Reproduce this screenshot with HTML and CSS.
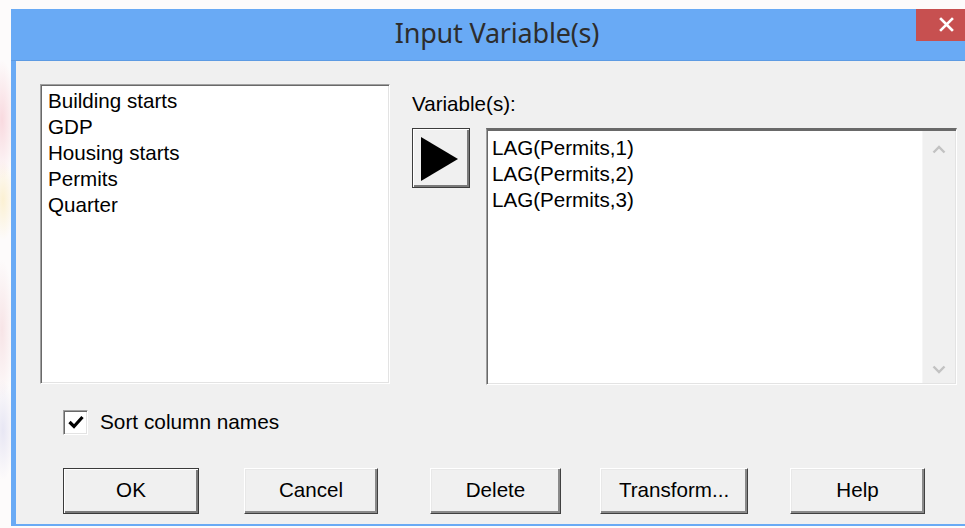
FILE: index.html
```html
<!DOCTYPE html>
<html lang="en">
<head>
<meta charset="utf-8">
<title>Input Variable(s)</title>
<link rel="stylesheet" href="styles.css">
</head>
<body>
<div class="desktop">
  <div class="window">
    <div class="titlebar">
      <div class="title">Input Variable(s)</div>
      <div class="close">
        <svg width="15" height="15" viewBox="0 0 15 15"><path d="M2 2 L13 13 M13 2 L2 13" stroke="#fff" stroke-width="2.6" stroke-linecap="square"/></svg>
      </div>
    </div>
    <div class="client">
      <div class="top-row">
        <div class="listbox source">
          <div class="item">Building starts</div>
          <div class="item">GDP</div>
          <div class="item">Housing starts</div>
          <div class="item">Permits</div>
          <div class="item">Quarter</div>
        </div>
        <div class="target-col">
          <div class="field-label">Variable(s):</div>
          <div class="target-row">
            <div class="arrow-btn">
              <svg width="38" height="46" viewBox="0 0 38 46"><polygon points="0,1 37,23 0,45" fill="#000"/></svg>
            </div>
            <div class="listbox target">
              <div class="items">
                <div class="item">LAG(Permits,1)</div>
                <div class="item">LAG(Permits,2)</div>
                <div class="item">LAG(Permits,3)</div>
              </div>
              <div class="scrollbar">
                <svg width="14" height="9" viewBox="0 0 14 9"><path d="M1.5 7.5 L7 2 L12.5 7.5" fill="none" stroke="#c2c2c2" stroke-width="2.4"/></svg>
                <svg width="14" height="9" viewBox="0 0 14 9"><path d="M1.5 1.5 L7 7 L12.5 1.5" fill="none" stroke="#c2c2c2" stroke-width="2.4"/></svg>
              </div>
            </div>
          </div>
        </div>
      </div>
      <label class="check-row">
        <span class="checkbox">
          <svg width="16" height="14" viewBox="0 0 16 14"><path d="M1.5 7 L6 11.5 L14.5 2" fill="none" stroke="#000" stroke-width="3.2"/></svg>
        </span>
        <span class="check-text">Sort column names</span>
      </label>
      <div class="buttons">
        <div class="btn default btn-ok">OK</div>
        <div class="btn btn-cancel">Cancel</div>
        <div class="btn btn-delete">Delete</div>
        <div class="btn btn-transform">Transform...</div>
        <div class="btn btn-help">Help</div>
      </div>
    </div>
  </div>
</div>
</body>
</html>
```
FILE: styles.css
```css
html, body {
  margin: 0;
  padding: 0;
  width: 965px;
  height: 528px;
  overflow: hidden;
}

body {
  background:
    radial-gradient(ellipse 14px 60px at 2px 120px, rgba(245, 190, 200, 0.55), transparent),
    radial-gradient(ellipse 12px 40px at 3px 200px, rgba(250, 230, 170, 0.5), transparent),
    radial-gradient(ellipse 12px 70px at 2px 330px, rgba(240, 200, 205, 0.45), transparent),
    radial-gradient(ellipse 12px 50px at 3px 430px, rgba(205, 205, 235, 0.45), transparent),
    #fdfbfb;
  font-family: "Liberation Sans", Arial, sans-serif;
  color: #000;
}

.desktop {
  padding: 9px 0 0 11px;
}

.window {
  width: 954px;
  height: 517px;
  display: flex;
  flex-direction: column;
  background: #69aaf5;
}

/* caption */
.titlebar {
  position: relative;
  height: 51px;
  border-bottom: 1px solid #5d9be3;
  display: flex;
  align-items: center;
  justify-content: center;
}

.title {
  font-family: "Noto Sans", "Open Sans", sans-serif;
  font-size: 27px;
  color: #2d2d2d;
  margin-left: 18px;
  margin-top: -5px;
  letter-spacing: -0.2px;
}

.close {
  position: absolute;
  top: 0;
  right: 0;
  width: 49px;
  height: 32px;
  background: #c75050;
  display: flex;
  align-items: center;
  justify-content: center;
  padding: 0 0 2px 12px;
  box-sizing: border-box;
}

/* dialog area */
.client {
  flex: 1;
  margin-left: 5px;
  margin-bottom: 2px;
  background: #f0f0f0;
  padding: 23px 0 0 24px;
  box-sizing: border-box;
}

.top-row {
  display: flex;
  align-items: flex-start;
}

.listbox {
  background: #fff;
  box-sizing: border-box;
  border-top: 1px solid #a0a0a0;
  border-left: 1px solid #a0a0a0;
  border-right: 1px solid #fff;
  border-bottom: 1px solid #fff;
  box-shadow: inset 1px 1px 0 #696969, inset -1px -1px 0 #e3e3e3;
}

.item {
  font-size: 20.6px;
  line-height: 26px;
  height: 26px;
  white-space: nowrap;
}

.source {
  width: 350px;
  height: 300px;
  padding: 3px 0 0 7px;
}

.target-col {
  margin-left: 22px;
  display: flex;
  flex-direction: column;
}

.field-label {
  font-size: 20.6px;
  line-height: 24px;
  height: 44px;
  padding-top: 8px;
  box-sizing: border-box;
}

.target-row {
  display: flex;
  align-items: flex-start;
}

.arrow-btn {
  width: 58px;
  height: 60px;
  box-sizing: border-box;
  background: #f0f0f0;
  border: 1px solid #3c3c3c;
  box-shadow: inset 1px 1px 0 #fff, inset -2px -2px 0 #7a7a7a;
  display: flex;
  align-items: center;
  justify-content: center;
  padding: 1px 2px 0 0;
}

.target {
  margin-left: 16px;
  width: 471px;
  height: 257px;
  display: flex;
  border-top-color: #696969;
  border-top-width: 2px;
}

.target .items {
  flex: 1;
  padding: 5px 0 0 5px;
}

.scrollbar {
  width: 33px;
  margin: 1px 1px 1px 0;
  background: #f0f0f0;
  border-left: 1px solid #f6f6f6;
  display: flex;
  flex-direction: column;
  justify-content: space-between;
  align-items: center;
  padding: 14px 0 9px;
  box-sizing: border-box;
}

/* checkbox */
.check-row {
  display: flex;
  align-items: center;
  margin: 24px 0 0 23px;
  height: 26px;
}

.checkbox {
  width: 25px;
  height: 25px;
  box-sizing: border-box;
  background: #fff;
  border-top: 1px solid #a0a0a0;
  border-left: 1px solid #a0a0a0;
  border-right: 1px solid #fff;
  border-bottom: 1px solid #fff;
  box-shadow: inset 1px 1px 0 #696969, inset -1px -1px 0 #e3e3e3;
  display: flex;
  align-items: center;
  justify-content: center;
}

.check-text {
  font-size: 20.8px;
  margin-left: 12px;
}

/* push buttons */
.buttons {
  display: flex;
  margin: 33px 0 0 23px;
}

.btn {
  height: 46px;
  box-sizing: border-box;
  background: #f0f0f0;
  border-top: 1px solid #fff;
  border-left: 1px solid #fff;
  border-right: 1px solid #404040;
  border-bottom: 1px solid #404040;
  box-shadow: inset -2px -2px 0 #8a8a8a, inset 1px 1px 0 #e8e8e8;
  display: flex;
  align-items: center;
  justify-content: center;
  font-size: 20.6px;
  padding-bottom: 2px;
}

.btn.default {
  border: 1px solid #3a3a3a;
  box-shadow: inset 1px 1px 0 #fff, inset -2px -2px 0 #7a7a7a;
}

.btn-ok { width: 136px; }
.btn-cancel { width: 134px; margin-left: 45px; }
.btn-delete { width: 131px; margin-left: 52px; }
.btn-transform { width: 148px; margin-left: 39px; }
.btn-help { width: 135px; margin-left: 42px; }
```
